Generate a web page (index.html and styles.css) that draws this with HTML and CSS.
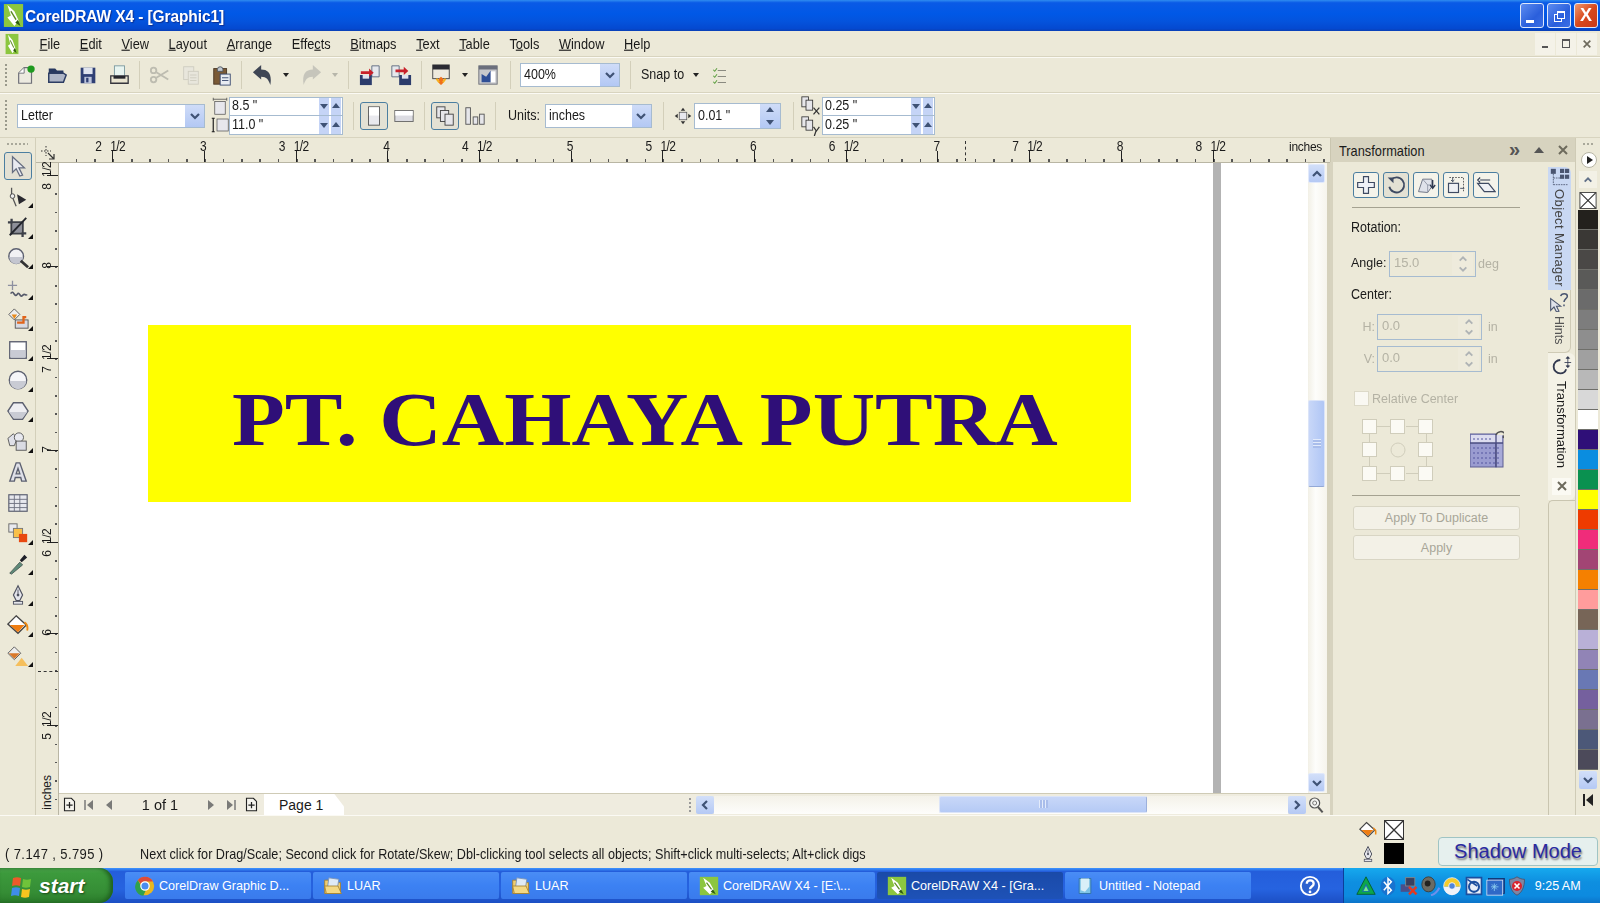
FILE: index.html
```html
<!DOCTYPE html>
<html lang="en">
<head>
<meta charset="utf-8">
<title>CorelDRAW X4 - [Graphic1]</title>
<link rel="stylesheet" href="styles.css">
</head>
<body>
<svg class="defs" xmlns="http://www.w3.org/2000/svg">
  <symbol id="corel" viewBox="0 0 24 24" preserveAspectRatio="none"><rect x="1" y="1" width="22" height="22" fill="#8cc63f"/><path d="M5 2l8 6 5 9-5 5-8-8 4-2z" fill="#fff"/><path d="M9 8l6 8" stroke="#5b8a1e" stroke-width="1.5"/><path d="M14 19l6 3-3-6z" fill="#2f5d10"/></symbol>
  <symbol id="chev" viewBox="0 0 12 12"><path d="M2 4l4 4 4-4" fill="none" stroke="#3f5275" stroke-width="2.2"/></symbol>
  <symbol id="chevu" viewBox="0 0 12 12"><path d="M2 8l4-4 4 4" fill="none" stroke="#3f5275" stroke-width="2.2"/></symbol>
  <symbol id="chevl" viewBox="0 0 12 12"><path d="M8 2L4 6l4 4" fill="none" stroke="#3f5275" stroke-width="2.2"/></symbol>
  <symbol id="chevr" viewBox="0 0 12 12"><path d="M4 2l4 4-4 4" fill="none" stroke="#3f5275" stroke-width="2.2"/></symbol>
  <symbol id="tri" viewBox="0 0 10 10"><path d="M1 3h8L5 8z" fill="#3f5275"/></symbol>
  <symbol id="triu" viewBox="0 0 10 10"><path d="M1 7h8L5 2z" fill="#3f5275"/></symbol>
  <symbol id="cornic" viewBox="0 0 16 16"><path d="M6 1v10M1 6h10" stroke="#333" stroke-dasharray="1.500 1.500" fill="none"/><path d="M8 8l6 6M14 9v5H9" fill="none" stroke="#333" stroke-width="1.200"/></symbol>
  <symbol id="new" viewBox="0 0 24 24"><path d="M4 10l6-6h8v17H4z" fill="#eceae0" stroke="#6f7078" stroke-width="1.3"/><path d="M4 10h6V4" fill="#fff" stroke="#6f7078"/><circle cx="17.5" cy="5.5" r="4" fill="#1f9a1f"/></symbol>
  <symbol id="open" viewBox="0 0 24 24"><path d="M3 5h7l2 2h7v4H3z" fill="#27385f"/><path d="M3 20V10h16l3 2-3 8z" fill="#aeb5c6" stroke="#2d3d63" stroke-width="1.6"/></symbol>
  <symbol id="save" viewBox="0 0 24 24"><path d="M4 4h16v17H4z" fill="#2f3f74"/><rect x="7" y="4" width="10" height="7" fill="#dfe3ee"/><rect x="8" y="14" width="8" height="7" fill="#bcc4dc"/><rect x="10" y="15" width="2.5" height="5" fill="#2f3f74"/></symbol>
  <symbol id="print" viewBox="0 0 24 24"><rect x="7" y="2" width="11" height="12" fill="#e8f4f0" stroke="#7c9aa0"/><path d="M3 13h19v8H3z" fill="#e9e4d0" stroke="#35353d" stroke-width="1.4"/><rect x="6" y="13" width="13" height="3" fill="#25252c"/></symbol>
  <symbol id="cut" viewBox="0 0 24 24"><g fill="none" stroke="#bdbcb0" stroke-width="2"><circle cx="5" cy="7" r="3"/><circle cx="5" cy="17" r="3"/><path d="M8 9l13 8M8 15l13-8"/></g></symbol>
  <symbol id="copy" viewBox="0 0 24 24"><g fill="#e8e6dc" stroke="#cfcdc0"><rect x="4" y="3" width="11" height="14"/><rect x="9" y="8" width="11" height="14"/><path d="M11 12h7M11 15h7M11 18h7"/></g></symbol>
  <symbol id="paste" viewBox="0 0 24 24"><rect x="3" y="5" width="14" height="17" fill="#7a5a36" stroke="#4b3826"/><path d="M7 6a3 3 0 016 0v2H7z" fill="#c0c8d0" stroke="#505860"/><rect x="10" y="11" width="11" height="12" fill="#e8ecf2" stroke="#3a4a70"/><path d="M12 15h7M12 18h7" stroke="#3a4a70"/></symbol>
  <symbol id="undo" viewBox="0 0 24 24"><path d="M1 9l9-8v5c8 0 12 5 10 17-2-6-4-9-10-9v3z" fill="#3f4655"/></symbol>
  <symbol id="redo" viewBox="0 0 24 24"><path d="M23 9l-9-8v5C6 6 2 11 4 23c2-6 4-9 10-9v3z" fill="#c6c5bb"/></symbol>
  <symbol id="import" viewBox="0 0 24 24"><path d="M14 2h8v12h-8z" fill="#e6e8ec" stroke="#5e6a80"/><rect x="1" y="12" width="13" height="11" fill="#2c3c6c"/><rect x="4" y="12" width="7" height="4" fill="#dfe3ee"/><path d="M2 8h9V5l5 4.5L11 14v-3H2z" fill="#c8202a"/></symbol>
  <symbol id="export" viewBox="0 0 24 24"><path d="M2 2h8v12H2z" fill="#e6e8ec" stroke="#5e6a80"/><rect x="10" y="12" width="13" height="11" fill="#2c3c6c"/><rect x="13" y="12" width="7" height="4" fill="#dfe3ee"/><path d="M6 6h9V3l5 4.5L15 12V9H6z" fill="#c8202a"/></symbol>
  <symbol id="publish" viewBox="0 0 24 24"><rect x="3" y="1" width="18" height="15" fill="#eeeadd" stroke="#444"/><rect x="3" y="1" width="18" height="5" fill="#2a2a32"/><path d="M12 14c4 3 4 6 0 9-4-3-4-6 0-9z" fill="#f0701a"/><path d="M7 16l3 4M17 16l-3 4" stroke="#f5b020" stroke-width="2"/></symbol>
  <symbol id="conn" viewBox="0 0 24 24"><rect x="2" y="2" width="20" height="20" fill="#c8c9cc" stroke="#6d7078"/><rect x="2" y="2" width="20" height="4" fill="#6b6f7c"/><path d="M5 20V11l5 3 5-7v13z" fill="#2f4f96"/><rect x="15" y="8" width="5" height="12" fill="#fff"/></symbol>
  <symbol id="check" viewBox="0 0 24 24"><g fill="none" stroke-width="1.4"><path d="M3 5l2 2 3-4M3 13l2 2 3-4M3 21l2 2 3-4" stroke="#5fa042"/><path d="M9 6h11M9 14h11M9 22h11" stroke="#8a8a80"/></g></symbol>
  <symbol id="pgw" viewBox="0 0 24 24"><path d="M3 3h18M3 1v4M21 1v4" stroke="#444" fill="none"/><rect x="5" y="6" width="14" height="17" fill="#e7e7ec" stroke="#555"/></symbol>
  <symbol id="pgh" viewBox="0 0 24 24"><path d="M3 3v18M1 3h4M1 21h4" stroke="#222" stroke-width="1.6" fill="none"/><rect x="8" y="4" width="15" height="16" fill="#e7e7ec" stroke="#555"/></symbol>
  <symbol id="portrait" viewBox="0 0 24 24"><rect x="6" y="2" width="12" height="20" fill="#e9e9ee" stroke="#555"/><rect x="6.5" y="2.500" width="11" height="9" fill="#fff"/></symbol>
  <symbol id="landscape" viewBox="0 0 24 24"><rect x="2" y="6" width="20" height="12" fill="#dcdce2" stroke="#666"/><rect x="2.500" y="6.500" width="19" height="5" fill="#fff"/></symbol>
  <symbol id="pages" viewBox="0 0 24 24"><g fill="#e6e6ea" stroke="#444"><rect x="3" y="2" width="9" height="12"/><rect x="7" y="6" width="9" height="12"/><rect x="12" y="10" width="9" height="12"/></g></symbol>
  <symbol id="layout" viewBox="0 0 24 24"><g fill="#e6e6ea" stroke="#555"><rect x="2" y="3" width="5" height="18"/><rect x="10" y="13" width="5" height="8"/><rect x="17" y="10" width="5" height="11"/></g></symbol>
  <symbol id="nudge" viewBox="0 0 24 24"><rect x="7" y="7" width="10" height="10" fill="#e8e8ee" stroke="#555"/><path d="M12 1l3 4H9zM12 23l3-4H9zM1 12l4-3v6zM23 12l-4-3v6z" fill="#333"/></symbol>
  <symbol id="dupx" viewBox="0 0 24 24"><g fill="#e6e6ea" stroke="#333"><rect x="1" y="1" width="8" height="12"/><rect x="6" y="5" width="8" height="12"/></g><path d="M15 14l7 8M22 14l-7 8" stroke="#333" stroke-width="1.5"/></symbol>
  <symbol id="dupy" viewBox="0 0 24 24"><g fill="#e6e6ea" stroke="#333"><rect x="1" y="1" width="8" height="12"/><rect x="6" y="5" width="8" height="12"/></g><path d="M15 13l3.500 5 3.500-5M18 18l-2 6" stroke="#333" stroke-width="1.5" fill="none"/></symbol>
  <symbol id="pick" viewBox="0 0 24 24"><path d="M6 2v17l4-4 4 8 3-1-4-8h6z" fill="#e9eaf0" stroke="#666d80" stroke-width="1.4"/></symbol>
  <symbol id="shape" viewBox="0 0 24 24"><path d="M5 2v8l5 12" fill="none" stroke="#555" stroke-width="1.4"/><circle cx="6" cy="11" r="2.500" fill="#eee" stroke="#444"/><path d="M11 9l10 6-8 5z" fill="#2a2a30"/></symbol>
  <symbol id="crop" viewBox="0 0 24 24"><path d="M5 3v16h16M1 7h16v16" fill="none" stroke="#3d4048" stroke-width="2.5"/><rect x="6" y="8" width="10" height="10" fill="#8d8f9a"/><path d="M3 21L21 2" stroke="#23252c" stroke-width="2"/></symbol>
  <symbol id="zoom" viewBox="0 0 24 24"><circle cx="10" cy="10" r="8" fill="#f1f1f4" stroke="#5c6070" stroke-width="1.600"/><path d="M2.500 11h15a7.500 7.500 0 01-15 0z" fill="#c4c6d0"/><path d="M15 15l8 7" stroke="#333" stroke-width="3"/></symbol>
  <symbol id="curve" viewBox="0 0 24 24"><path d="M6 3v10M1 8h10" stroke="#8d90a0" stroke-width="1.4"/><path d="M4 17c3-5 4 5 7 1s3 4 6 1 3 1 5-1" fill="none" stroke="#565a6a" stroke-width="1.800"/></symbol>
  <symbol id="smart" viewBox="0 0 24 24"><path d="M8 1l6 6-6 6-6-6z" fill="#eee" stroke="#555"/><path d="M5 7l6 0-3 5z" fill="#e88a1a"/><rect x="9" y="13" width="14" height="9" fill="#d8dae2" stroke="#555"/><path d="M11 16h7v-6h3" fill="none" stroke="#e0641a" stroke-width="2.500"/></symbol>
  <symbol id="rect" viewBox="0 0 24 24"><rect x="3" y="3" width="18" height="18" fill="#fff" stroke="#5c6070" stroke-width="1.500"/><rect x="4" y="12" width="16" height="8" fill="#c9cbd4"/></symbol>
  <symbol id="ell" viewBox="0 0 24 24"><circle cx="12" cy="12" r="9.500" fill="#f5f5f8" stroke="#5c6070" stroke-width="1.500"/><path d="M3 13h18a9 9 0 01-18 0z" fill="#c9cbd4"/></symbol>
  <symbol id="poly" viewBox="0 0 24 24"><path d="M7 3h10l6 9-6 9H7L1 12z" fill="#eeeef2" stroke="#5c6070" stroke-width="1.500"/><path d="M2 13h20l-5 7H7z" fill="#c9cbd4"/></symbol>
  <symbol id="shapes" viewBox="0 0 24 24"><path d="M1 8l6-5 4 5-3 8H3z" fill="#dfe0e8" stroke="#555"/><circle cx="13" cy="7" r="5" fill="#e8e9ef" stroke="#555"/><rect x="10" y="11" width="11" height="10" fill="#dadbe3" stroke="#555"/></symbol>
  <symbol id="atext" viewBox="0 0 24 24"><path d="M3 22L10 2h4l7 20h-5l-1-4H9l-1 4zM10 14h4l-2-6z" fill="#dfe0e8" stroke="#5c6070" stroke-width="1.500"/></symbol>
  <symbol id="table" viewBox="0 0 24 24"><rect x="2" y="3" width="20" height="18" fill="#e7e8ee" stroke="#5c6070" stroke-width="1.300"/><path d="M2 8h20M2 12.500h20M2 17h20M8 3v18M14 3v18" stroke="#6c7080"/></symbol>
  <symbol id="blend" viewBox="0 0 24 24"><rect x="2" y="2" width="9" height="9" fill="#e9eaef" stroke="#666"/><rect x="7" y="7" width="10" height="10" fill="#f8c04a" stroke="#777"/><rect x="13" y="13" width="9" height="9" fill="#e8480f"/></symbol>
  <symbol id="drop" viewBox="0 0 24 24"><path d="M3 22l11-12 3 3L5 23z" fill="#5d8a78" stroke="#4b5c58"/><path d="M14 8l5-6 3 3-6 5z" fill="#1d1f28"/></symbol>
  <symbol id="pen" viewBox="0 0 24 24"><path d="M12 2l5 10-3 6h-4l-3-6z" fill="#e5e6ec" stroke="#4f5260" stroke-width="1.300"/><path d="M12 6v6" stroke="#4f5260"/><circle cx="12" cy="12" r="1.500" fill="#4f5260"/><rect x="7" y="19" width="10" height="3" fill="#e5e6ec" stroke="#4f5260"/></symbol>
  <symbol id="fill" viewBox="0 0 24 24"><path d="M10 2l11 10-9 9L1 11z" fill="#fff" stroke="#444" stroke-width="1.500"/><path d="M3 12h16l-7 8z" fill="#ef7d12"/><path d="M19 9c3 2 4 5 3 9" fill="none" stroke="#ef8a12" stroke-width="2"/></symbol>
  <symbol id="ifill" viewBox="0 0 24 24"><path d="M8 2l7 7-7 7-7-7z" fill="#eee" stroke="#555"/><path d="M2 9h12l-6 6z" fill="#d9782a"/><path d="M9 23l7-9 7 9z" fill="#f5bf5d"/></symbol>
  <symbol id="plusdoc" viewBox="0 0 24 24"><path d="M4 2h11l5 5v15H4z" fill="#f5f4ee" stroke="#222" stroke-width="1.800"/><path d="M12 8v10M7 13h10" stroke="#222" stroke-width="2"/></symbol>
  <symbol id="pfirst" viewBox="0 0 12 12"><path d="M2 1v10" stroke="#7a7a78" stroke-width="1.500"/><path d="M10 1v10L4 6z" fill="#7a7a78"/></symbol>
  <symbol id="pprev" viewBox="0 0 12 12"><path d="M9 1v10L3 6z" fill="#7a7a78"/></symbol>
  <symbol id="pnext" viewBox="0 0 12 12"><path d="M3 1v10l6-5z" fill="#7a7a78"/></symbol>
  <symbol id="plast" viewBox="0 0 12 12"><path d="M2 1v10l6-5z" fill="#7a7a78"/><path d="M10 1v10" stroke="#7a7a78" stroke-width="1.500"/></symbol>
  <symbol id="mag" viewBox="0 0 24 24"><circle cx="10" cy="9" r="7.500" fill="#f4f4f2" stroke="#555" stroke-width="1.800"/><circle cx="10" cy="9" r="3" fill="none" stroke="#777" stroke-width="1.500"/><path d="M15 15l7 8" stroke="#555" stroke-width="3"/></symbol>
  <symbol id="dmove" viewBox="0 0 24 24"><path d="M9 2h6v7h7v6h-7v7H9v-7H2V9h7z" fill="#eef1f7" stroke="#3e4a62" stroke-width="1.400"/></symbol>
  <symbol id="drot" viewBox="0 0 24 24"><path d="M6 6a9 9 0 11-2 8" fill="none" stroke="#3e4a62" stroke-width="2.200"/><path d="M2 3h7v7z" fill="#3e4a62"/></symbol>
  <symbol id="dscale" viewBox="0 0 24 24"><path d="M3 20L8 5h11v9l-5 7z" fill="#dfe2ea" stroke="#747a8a" stroke-width="1.200"/><path d="M8 5l6 7v9M14 12h5" fill="none" stroke="#8a90a0"/><path d="M20 6v9M17 12l3 4 3-4" fill="none" stroke="#2d3850" stroke-width="1.600"/></symbol>
  <symbol id="dsize" viewBox="0 0 24 24"><path d="M4 3h17v18" fill="none" stroke="#444" stroke-dasharray="2 1.500"/><rect x="3" y="10" width="12" height="11" fill="#eef0f4" stroke="#3e4a62" stroke-width="1.400"/><path d="M8 3v5M6 6l2 2 2-2M17 16h5" stroke="#2d3850" fill="none"/></symbol>
  <symbol id="dskew" viewBox="0 0 24 24"><path d="M2 10h13l8 10H10z" fill="#eef0f4" stroke="#3e4a62" stroke-width="1.500"/><path d="M5 6h12M5 3L2 6l3 3" fill="none" stroke="#2d3850" stroke-width="1.300"/></symbol>
  <symbol id="sbgrid" viewBox="0 0 34 38"><rect x="0" y="4" width="26" height="33" fill="#9a9cd0" stroke="#5c5e92"/><rect x="26" y="6" width="7" height="31" fill="#a8aad8" stroke="#5c5e92"/><rect x="1" y="5" width="31" height="8" fill="#dcdcef"/><path d="M0 13h33M26 4v33" stroke="#4a4c80" stroke-width="1.300"/><path d="M3 9h20M3 18h28M3 23h28M3 28h28M3 33h28" stroke="#5557a0" stroke-dasharray="2 2"/><path d="M26 5a5 5 0 019-1l-2 4" fill="none" stroke="#555" stroke-width="1.500"/></symbol>
  <symbol id="tabom" viewBox="0 0 24 24"><g fill="#4a5570"><rect x="1" y="1" width="6" height="6"/><rect x="12" y="1" width="5" height="5"/><rect x="18" y="1" width="5" height="5"/><rect x="12" y="8" width="5" height="5"/><rect x="18" y="8" width="5" height="5"/></g><path d="M4 7v13M4 12h8M4 20h18" stroke="#4a5570" stroke-dasharray="2 1" fill="none"/></symbol>
  <symbol id="tabh" viewBox="0 0 24 24"><path d="M2 8v14l4-4 3 6 3-1-3-6h5z" fill="#dfe2ea" stroke="#4a5570" stroke-width="1.300"/><path d="M14 5c1-4 8-4 8 0 0 3-4 3-4 7M18 15v2" fill="none" stroke="#4a5570" stroke-width="1.800"/></symbol>
  <symbol id="tabt" viewBox="0 0 24 24"><path d="M10 6a8 8 0 100 16c4 0 6-2 7-5" fill="none" stroke="#333a50" stroke-width="2.200"/><path d="M15 9h8M19 2v13M19 2l-2 2h4zM19 15l-2-2h4z" stroke="#333a50" fill="#333a50"/></symbol>
  <symbol id="xmark" viewBox="0 0 12 12"><path d="M2 2l8 8M10 2l-8 8" stroke="#6d6a5c" stroke-width="2"/></symbol>
  <symbol id="xbox" viewBox="0 0 20 20"><rect x=".5" y=".5" width="19" height="19" fill="#fff" stroke="#333"/><path d="M1 1l18 18M19 1L1 19" stroke="#333" stroke-width="1.300"/></symbol>
  <symbol id="flag" viewBox="0 0 24 24"><path d="M3 4c3-1 5-1 8 0l-1 8c-3-1-5-1-8 0z" fill="#ee5a2a"/><path d="M13 5c3 1 5 1 8 0l-1 8c-3 1-5 1-8 0z" fill="#6fc33a"/><path d="M2 14c3-1 5-1 8 0l-1 8c-3-1-5-1-8 0z" fill="#3f8de8"/><path d="M12 15c3 1 5 1 8 0l-1 8c-3 1-5 1-8 0z" fill="#f7c51f"/></symbol>
  <symbol id="chrome" viewBox="0 0 24 24"><circle cx="12" cy="12" r="11" fill="#e8b81f"/><path d="M12 1a11 11 0 019.500 5.500H12a5.500 5.500 0 00-5 3L3.500 5A11 11 0 0112 1z" fill="#dd4b3a"/><path d="M3.500 5L8 13a5 5 0 005 4l-3 6.800A11 11 0 013.500 5z" fill="#2fa04f"/><circle cx="12" cy="12" r="5" fill="#4a8df0" stroke="#fff" stroke-width="1.500"/></symbol>
  <symbol id="folder" viewBox="0 0 24 24"><path d="M2 5h9l2 3h8v13H2z" fill="#f0cd6e" stroke="#a5802e"/><rect x="6" y="3" width="12" height="14" fill="#dfeaf6" stroke="#7a93b5" transform="rotate(8 12 10)"/><path d="M2 12h16l4 9H4z" fill="#f4d984" stroke="#a5802e"/></symbol>
  <symbol id="note" viewBox="0 0 24 24"><path d="M5 3h14v18H5z" fill="#7fc4e6" stroke="#2f6f9f"/><path d="M7 3h10v10l-5 6-5-2z" fill="#d9eff8"/></symbol>
  <symbol id="help" viewBox="0 0 24 24"><circle cx="12" cy="12" r="10" fill="#2d62d0" stroke="#fff" stroke-width="2"/><path d="M8.500 9.500c0-5 7.500-5 7.500 0 0 3-4 3-4 6" fill="none" stroke="#fff" stroke-width="2.500"/><circle cx="12" cy="18.500" r="1.500" fill="#fff"/></symbol>
  <symbol id="t1" viewBox="0 0 24 24"><path d="M12 1l11 21H1z" fill="#0da64b" stroke="#05582a"/><path d="M12 9l5 10H7z" fill="#1a6fb0"/><path d="M12 12l3 6H9z" fill="#78ea8c"/></symbol>
  <symbol id="t2" viewBox="0 0 24 24"><ellipse cx="12" cy="12" rx="9" ry="11" fill="#1873cf"/><path d="M7 7l9 10-4 4V3l4 4-9 10" fill="none" stroke="#fff" stroke-width="1.800"/></symbol>
  <symbol id="t3" viewBox="0 0 24 24"><rect x="2" y="10" width="11" height="9" fill="#4a4f8a"/><rect x="8" y="2" width="11" height="10" fill="#38405f" stroke="#888"/><path d="M12 13l9 9M21 13l-9 9" stroke="#e23a22" stroke-width="3"/></symbol>
  <symbol id="t4" viewBox="0 0 24 24"><ellipse cx="9" cy="10" rx="8" ry="9" fill="#6b6b63" stroke="#3a3a36"/><circle cx="8" cy="9" r="3.500" fill="#232320"/><path d="M12 23c5-1 8-5 10-9" stroke="#6f8fea" stroke-width="2.500" fill="none"/></symbol>
  <symbol id="t5" viewBox="0 0 24 24"><path d="M12 2a10 10 0 0110 11H2A10 10 0 0112 2z" fill="#f5cd2c"/><circle cx="12" cy="12" r="10" fill="none" stroke="#e9ecf5" stroke-width="1"/><path d="M2 13h20a10 10 0 01-20 0z" fill="#f0f2f8"/><circle cx="12" cy="12" r="4" fill="#4f86d9" stroke="#fff"/></symbol>
  <symbol id="t6" viewBox="0 0 24 24"><path d="M3 2h18v20H3z" fill="#e8eff9" stroke="#1c4f9f" stroke-width="2"/><circle cx="12" cy="13" r="6" fill="none" stroke="#1c4f9f" stroke-width="2.500"/><path d="M4 4l12 8" stroke="#1c4f9f" stroke-width="2"/></symbol>
  <symbol id="t7" viewBox="0 0 24 24"><rect x="3" y="3" width="19" height="18" fill="#2350a0" stroke="#0f2f6a"/><rect x="1" y="5" width="19" height="18" fill="#2f69c7" stroke="#cfdcf0"/><path d="M10 9v9M6 13h9M7 10l6 6M13 10l-6 6" stroke="#8fd0f0"/></symbol>
  <symbol id="t8" viewBox="0 0 24 24"><path d="M12 1c3 2 6 3 9 3 0 9-3 16-9 19C6 20 3 13 3 4c3 0 6-1 9-3z" fill="#7f86a3" stroke="#4a4f68"/><circle cx="12" cy="12" r="6" fill="#d9232f"/><path d="M9 9l6 6M15 9l-6 6" stroke="#fff" stroke-width="2"/></symbol>
</svg>

<div class="app">
  <header class="titlebar">
    <svg class="ti-logo"><use href="#corel"/></svg>
    <span class="ti-text">CorelDRAW X4 - [Graphic1]</span>
    <div class="win-btns">
      <span class="wb"><i class="wb-min"></i></span>
      <span class="wb"><i class="wb-rest"></i></span>
      <span class="wb wb-close">X</span>
    </div>
  </header>

  <nav class="menubar">
    <svg class="mn-logo"><use href="#corel"/></svg>
    <span class="mi"><u>F</u>ile</span>
    <span class="mi"><u>E</u>dit</span>
    <span class="mi"><u>V</u>iew</span>
    <span class="mi"><u>L</u>ayout</span>
    <span class="mi"><u>A</u>rrange</span>
    <span class="mi">Effe<u>c</u>ts</span>
    <span class="mi"><u>B</u>itmaps</span>
    <span class="mi"><u>T</u>ext</span>
    <span class="mi"><u>T</u>able</span>
    <span class="mi">T<u>o</u>ols</span>
    <span class="mi"><u>W</u>indow</span>
    <span class="mi"><u>H</u>elp</span>
    <div class="mdi-btns">
      <span class="mb"><i class="mb-min"></i></span>
      <span class="mb"><i class="mb-rest"></i></span>
      <span class="mb"><svg class="ic10"><use href="#xmark"/></svg></span>
    </div>
  </nav>

  <div class="toolbar tb1">
    <span class="grip"></span>
    <span class="s31"><svg class="ic"><use href="#new"/></svg></span>
    <span class="s31"><svg class="ic"><use href="#open"/></svg></span>
    <span class="s31"><svg class="ic"><use href="#save"/></svg></span>
    <span class="s31"><svg class="ic"><use href="#print"/></svg></span>
    <span class="sep ml5 mr4"></span>
    <span class="s31"><svg class="ic"><use href="#cut"/></svg></span>
    <span class="s31"><svg class="ic"><use href="#copy"/></svg></span>
    <span class="s31"><svg class="ic"><use href="#paste"/></svg></span>
    <span class="sep ml4 mr6"></span>
    <span class="s30"><svg class="ic"><use href="#undo"/></svg></span>
    <span class="s16"><i class="mini"></i></span>
    <span class="s30 ml2"><svg class="ic"><use href="#redo"/></svg></span>
    <span class="s16 ml1"><i class="mini mini-off"></i></span>
    <span class="sep ml5 mr5"></span>
    <span class="s31"><svg class="ic"><use href="#import"/></svg></span>
    <span class="s31"><svg class="ic"><use href="#export"/></svg></span>
    <span class="sep ml5 mr4"></span>
    <span class="s30"><svg class="ic"><use href="#publish"/></svg></span>
    <span class="s16 ml1"><i class="mini"></i></span>
    <span class="s30"><svg class="ic"><use href="#conn"/></svg></span>
    <span class="sep ml7 mr9"></span>
    <div class="combo cb-zoom"><span class="cb-val">400%</span><span class="dd"><svg class="ic12"><use href="#chev"/></svg></span></div>
    <span class="sep ml10 mr10"></span>
    <span class="lbl">Snap to</span>
    <span class="s16 ml4"><i class="mini"></i></span>
    <span class="s16 ml8"><svg class="ic18"><use href="#check"/></svg></span>
  </div>

  <div class="toolbar tb2">
    <span class="grip"></span>
    <div class="combo cb-page"><span class="cb-val">Letter</span><span class="dd"><svg class="ic12"><use href="#chev"/></svg></span></div>
    <div class="stackic"><svg class="ic18"><use href="#pgw"/></svg><svg class="ic18"><use href="#pgh"/></svg></div>
    <div class="pair pair-size">
      <div class="pr"><span class="pv">8.5 "</span><span class="mspin"><svg class="ic10"><use href="#tri"/></svg></span><span class="mspin"><svg class="ic10"><use href="#triu"/></svg></span></div>
      <div class="pr"><span class="pv">11.0 "</span><span class="mspin"><svg class="ic10"><use href="#tri"/></svg></span><span class="mspin"><svg class="ic10"><use href="#triu"/></svg></span></div>
    </div>
    <span class="sep ml10 mr6"></span>
    <span class="tbtn"><svg class="ic"><use href="#portrait"/></svg></span>
    <span class="s32"><svg class="ic"><use href="#landscape"/></svg></span>
    <span class="sep ml4 mr6"></span>
    <span class="tbtn"><svg class="ic"><use href="#pages"/></svg></span>
    <span class="s32"><svg class="ic"><use href="#layout"/></svg></span>
    <span class="sep ml4 mr12"></span>
    <span class="lbl lbl-units">Units:</span>
    <div class="combo cb-units ml5"><span class="cb-val">inches</span><span class="dd"><svg class="ic12"><use href="#chev"/></svg></span></div>
    <span class="sep ml11 mr9"></span>
    <span class="s21"><svg class="ic18"><use href="#nudge"/></svg></span>
    <div class="combo cb-nudge"><span class="cb-val">0.01 "</span><span class="spin"><svg class="ic10"><use href="#triu"/></svg><svg class="ic10"><use href="#tri"/></svg></span></div>
    <span class="sep ml12 mr6"></span>
    <div class="stackic sic22"><svg class="ic20"><use href="#dupx"/></svg><svg class="ic20"><use href="#dupy"/></svg></div>
    <div class="pair pair-dup">
      <div class="pr"><span class="pv">0.25 "</span><span class="mspin"><svg class="ic10"><use href="#tri"/></svg></span><span class="mspin"><svg class="ic10"><use href="#triu"/></svg></span></div>
      <div class="pr"><span class="pv">0.25 "</span><span class="mspin"><svg class="ic10"><use href="#tri"/></svg></span><span class="mspin"><svg class="ic10"><use href="#triu"/></svg></span></div>
    </div>
  </div>

  <div class="workspace">
    <aside class="toolbox">
      <span class="grip-h"></span>
      <span class="tool tool-on"><svg class="ic"><use href="#pick"/></svg></span>
      <span class="tool fly"><svg class="ic"><use href="#shape"/></svg></span>
      <span class="tool fly"><svg class="ic"><use href="#crop"/></svg></span>
      <span class="tool fly"><svg class="ic"><use href="#zoom"/></svg></span>
      <span class="tool fly"><svg class="ic"><use href="#curve"/></svg></span>
      <span class="tool fly"><svg class="ic"><use href="#smart"/></svg></span>
      <span class="tool fly"><svg class="ic"><use href="#rect"/></svg></span>
      <span class="tool fly"><svg class="ic"><use href="#ell"/></svg></span>
      <span class="tool fly"><svg class="ic"><use href="#poly"/></svg></span>
      <span class="tool fly"><svg class="ic"><use href="#shapes"/></svg></span>
      <span class="tool"><svg class="ic"><use href="#atext"/></svg></span>
      <span class="tool"><svg class="ic"><use href="#table"/></svg></span>
      <span class="tool fly"><svg class="ic"><use href="#blend"/></svg></span>
      <span class="tool fly"><svg class="ic"><use href="#drop"/></svg></span>
      <span class="tool fly"><svg class="ic"><use href="#pen"/></svg></span>
      <span class="tool fly"><svg class="ic"><use href="#fill"/></svg></span>
      <span class="tool fly"><svg class="ic"><use href="#ifill"/></svg></span>
    </aside>

    <section class="doc">
      <div class="rtop">
        <div class="corner"><svg class="ic16"><use href="#cornic"/></svg></div>
        <div class="rtop-track">
          <div class="rc"><span class="rn">2</span><span class="rh">1/2</span></div>
          <div class="rc"><span class="rw">3</span></div>
          <div class="rc"><span class="rn">3</span><span class="rh">1/2</span></div>
          <div class="rc"><span class="rw">4</span></div>
          <div class="rc"><span class="rn">4</span><span class="rh">1/2</span></div>
          <div class="rc"><span class="rw">5</span></div>
          <div class="rc"><span class="rn">5</span><span class="rh">1/2</span></div>
          <div class="rc"><span class="rw">6</span></div>
          <div class="rc"><span class="rn">6</span><span class="rh">1/2</span></div>
          <div class="rc"><span class="rw">7</span></div>
          <div class="rc"><span class="rn">7</span><span class="rh">1/2</span></div>
          <div class="rc"><span class="rw">8</span></div>
          <div class="rc"><span class="rn">8</span><span class="rh">1/2</span></div>
          <span class="runit">inches</span>
          <i class="rcursor"></i>
        </div>
      </div>
      <div class="docbody">
        <div class="rleft">
          <div class="vc"><span class="vn">8</span><span class="vh">1/2</span></div>
          <div class="vc"><span class="vw">8</span></div>
          <div class="vc"><span class="vn">7</span><span class="vh">1/2</span></div>
          <div class="vc"><span class="vw">7</span></div>
          <div class="vc"><span class="vn">6</span><span class="vh">1/2</span></div>
          <div class="vc"><span class="vw">6</span></div>
          <div class="vc"><span class="vn">5</span><span class="vh">1/2</span></div>
          <span class="vunit">inches</span>
          <i class="vcursor"></i>
        </div>
        <div class="docmain">
          <div class="canvasrow">
            <div class="canvas">
              <div class="pageedge"></div>
              <div class="banner"><span class="banner-text">PT. CAHAYA PUTRA</span></div>
            </div>
            <div class="vscroll">
              <span class="sbtn"><svg class="ic12"><use href="#chevu"/></svg></span>
              <span class="vthumb"><i class="thumbgrip"></i></span>
              <span class="sbtn"><svg class="ic12"><use href="#chev"/></svg></span>
            </div>
          </div>
          <div class="pagebar">
            <span class="pg"><svg class="ic14"><use href="#plusdoc"/></svg></span>
            <span class="pg"><svg class="ic12"><use href="#pfirst"/></svg></span>
            <span class="pg"><svg class="ic12"><use href="#pprev"/></svg></span>
            <span class="pgnum">1 of 1</span>
            <span class="pg"><svg class="ic12"><use href="#pnext"/></svg></span>
            <span class="pg"><svg class="ic12"><use href="#plast"/></svg></span>
            <span class="pg"><svg class="ic14"><use href="#plusdoc"/></svg></span>
            <span class="pgtab">Page 1</span>
            <i class="pggrip"></i>
            <div class="hscroll">
              <span class="hbtn"><svg class="ic12"><use href="#chevl"/></svg></span>
              <span class="htrack"><span class="hthumb"><i class="thumbgrip-h"></i></span></span>
              <span class="hbtn"><svg class="ic12"><use href="#chevr"/></svg></span>
            </div>
            <span class="pgmag"><svg class="ic16"><use href="#mag"/></svg></span>
          </div>
        </div>
      </div>
    </section>

    <aside class="docker">
      <div class="dk-head">
        <span class="dk-title">Transformation</span>
        <span class="dk-more">»</span>
        <span class="dk-up"></span>
        <svg class="ic12 dk-x"><use href="#xmark"/></svg>
      </div>
      <div class="dk-body">
        <div class="dk-panel">
          <div class="dk-tabs">
            <span class="dtb"><svg class="ic20"><use href="#dmove"/></svg></span>
            <span class="dtb dtb-on"><svg class="ic20"><use href="#drot"/></svg></span>
            <span class="dtb"><svg class="ic20"><use href="#dscale"/></svg></span>
            <span class="dtb"><svg class="ic20"><use href="#dsize"/></svg></span>
            <span class="dtb"><svg class="ic20"><use href="#dskew"/></svg></span>
          </div>
          <hr class="rule rule-a">
          <div class="fl fl-rot">Rotation:</div>
          <div class="frow fr-angle">
            <span class="fl-in">Angle:</span>
            <span class="dis-in di-angle"><span class="dv">15.0</span><span class="dspin"><svg class="ic10"><use href="#chevu"/></svg><svg class="ic10"><use href="#chev"/></svg></span></span>
            <span class="dunit">deg</span>
          </div>
          <div class="fl fl-center">Center:</div>
          <div class="frow fr-h">
            <span class="fl-dis">H:</span>
            <span class="dis-in di-c"><span class="dv">0.0</span><span class="dspin"><svg class="ic10"><use href="#chevu"/></svg><svg class="ic10"><use href="#chev"/></svg></span></span>
            <span class="dunit dunit-in">in</span>
          </div>
          <div class="frow fr-v">
            <span class="fl-dis">V:</span>
            <span class="dis-in di-c"><span class="dv">0.0</span><span class="dspin"><svg class="ic10"><use href="#chevu"/></svg><svg class="ic10"><use href="#chev"/></svg></span></span>
            <span class="dunit dunit-in">in</span>
          </div>
          <label class="relc"><span class="cbx"></span><span>Relative Center</span></label>
          <div class="anchors">
            <svg class="anchor-svg" viewBox="0 0 72 62">
              <g class="anc-lines"><path d="M15 7.500h14M44 7.500h13M15 54.500h14M44 54.500h13M7.500 15v8M64.500 15v8M7.500 38v9M64.500 38v9"/></g>
              <g class="anc-box"><rect x=".5" y=".5" width="14" height="14"/><rect x="28.500" y=".5" width="14" height="14"/><rect x="56.500" y=".5" width="14" height="14"/><rect x=".5" y="23.500" width="14" height="14"/><circle cx="36" cy="31" r="7"/><rect x="56.500" y="23.500" width="14" height="14"/><rect x=".5" y="47.500" width="14" height="14"/><rect x="28.500" y="47.500" width="14" height="14"/><rect x="56.500" y="47.500" width="14" height="14"/></g>
            </svg>
            <svg class="anchor-ic"><use href="#sbgrid"/></svg>
          </div>
          <hr class="rule rule-b">
          <span class="apply ap-a">Apply To Duplicate</span>
          <span class="apply ap-b">Apply</span>
        </div>
        <div class="dk-side">
          <div class="vtab vtab-om"><svg class="ic20"><use href="#tabom"/></svg><span class="vtxt">Object Manager</span></div>
          <div class="vtab vtab-h"><svg class="ic20"><use href="#tabh"/></svg><span class="vtxt">Hints</span></div>
          <div class="vtab vtab-t"><svg class="ic20"><use href="#tabt"/></svg><span class="vtxt">Transformation</span><span class="vclose"><svg class="ic12"><use href="#xmark"/></svg></span></div>
          <div class="vrest"></div>
        </div>
      </div>
    </aside>

    <aside class="palette">
      <span class="grip-p"></span>
      <span class="pl-play"></span>
      <span class="pl-up"><svg class="ic10"><use href="#chevu"/></svg></span>
      <svg class="pl-none"><use href="#xbox"/></svg>
      <div class="swatches">
        <i class="sw c1"></i><i class="sw c2"></i><i class="sw c3"></i><i class="sw c4"></i><i class="sw c5"></i><i class="sw c6"></i><i class="sw c7"></i><i class="sw c8"></i><i class="sw c9"></i><i class="sw c10"></i><i class="sw c11"></i><i class="sw c12"></i><i class="sw c13"></i><i class="sw c14"></i><i class="sw c15"></i><i class="sw c16"></i><i class="sw c17"></i><i class="sw c18"></i><i class="sw c19"></i><i class="sw c20"></i><i class="sw c21"></i><i class="sw c22"></i><i class="sw c23"></i><i class="sw c24"></i><i class="sw c25"></i><i class="sw c26"></i><i class="sw c27"></i><i class="sw c28"></i>
      </div>
      <span class="pl-down"><svg class="ic12"><use href="#chev"/></svg></span>
      <span class="pl-end"></span>
    </aside>
  </div>

  <footer class="status">
    <span class="st-coord">( 7.147 , 5.795 )</span>
    <span class="st-hint">Next click for Drag/Scale; Second click for Rotate/Skew; Dbl-clicking tool selects all objects; Shift+click multi-selects; Alt+click digs</span>
    <div class="st-swatches">
      <div class="st-row"><svg class="ic18"><use href="#fill"/></svg><svg class="st-sw"><use href="#xbox"/></svg></div>
      <div class="st-row"><svg class="ic18"><use href="#pen"/></svg><span class="st-black"></span></div>
    </div>
    <span class="shadow">Shadow Mode</span>
  </footer>

  <div class="taskbar">
    <span class="start"><svg class="ic22"><use href="#flag"/></svg><span class="start-t">start</span></span>
    <div class="tasks">
      <span class="task"><svg class="ic20"><use href="#chrome"/></svg><span>CorelDraw Graphic D...</span></span>
      <span class="task"><svg class="ic20"><use href="#folder"/></svg><span>LUAR</span></span>
      <span class="task"><svg class="ic20"><use href="#folder"/></svg><span>LUAR</span></span>
      <span class="task"><svg class="ic20"><use href="#corel"/></svg><span>CorelDRAW X4 - [E:\...</span></span>
      <span class="task task-on"><svg class="ic20"><use href="#corel"/></svg><span>CorelDRAW X4 - [Gra...</span></span>
      <span class="task"><svg class="ic20"><use href="#note"/></svg><span>Untitled - Notepad</span></span>
    </div>
    <svg class="tk-help"><use href="#help"/></svg>
    <div class="tray">
      <svg class="ic20"><use href="#t1"/></svg>
      <svg class="ic20"><use href="#t2"/></svg>
      <svg class="ic20"><use href="#t3"/></svg>
      <svg class="ic20"><use href="#t4"/></svg>
      <svg class="ic20"><use href="#t5"/></svg>
      <svg class="ic20"><use href="#t6"/></svg>
      <svg class="ic20"><use href="#t7"/></svg>
      <svg class="ic20"><use href="#t8"/></svg>
      <span class="clock">9:25 AM</span>
    </div>
  </div>
</div>
</body>
</html>
```

FILE: styles.css
```css
* { box-sizing: border-box; }
html, body { margin: 0; padding: 0; }
body { width: 1600px; height: 903px; overflow: hidden; background: #ece9d8; font-family: "Liberation Sans", Arial, sans-serif; font-size: 13px; color: #1a1a1a; }
.defs { position: absolute; width: 0; height: 0; }
.app { width: 1600px; height: 903px; display: flex; flex-direction: column; filter: blur(0.35px); }
svg { display: block; flex: none; }
i { display: block; font-style: normal; }

.ic { width: 22px; height: 22px; }
.ic10 { width: 10px; height: 10px; }
.ic12 { width: 12px; height: 12px; }
.ic14 { width: 15px; height: 17px; }
.ic16 { width: 16px; height: 16px; }
.ic18 { width: 18px; height: 18px; }
.ic20 { width: 20px; height: 20px; }
.ic22 { width: 24px; height: 24px; }

.ml1 { margin-left: 1px; } .ml2 { margin-left: 2px; } .ml4 { margin-left: 4px; } .ml5 { margin-left: 5px; } .ml7 { margin-left: 7px; } .ml8 { margin-left: 8px; } .ml10 { margin-left: 10px; } .ml11 { margin-left: 11px; } .ml12 { margin-left: 12px; }
.mr4 { margin-right: 4px; } .mr5 { margin-right: 5px; } .mr6 { margin-right: 6px; } .mr7 { margin-right: 7px; } .mr8 { margin-right: 8px; } .mr9 { margin-right: 9px; } .mr10 { margin-right: 10px; } .mr12 { margin-right: 12px; }

/* title bar */
.titlebar { height: 31px; flex: none; display: flex; align-items: center; padding: 0 2px 0 3px; background: linear-gradient(180deg, #2f8cf0 0, #0a5ae6 9%, #0058e6 45%, #0453dc 70%, #0449d0 92%, #0a3fb5 100%); color: #fff; }
.ti-logo { width: 21px; height: 25px; }
.ti-text { font-weight: 700; font-size: 15.5px; margin-left: 1px; text-shadow: 1px 1px 1px #0f2f90; transform: scaleY(1.12); letter-spacing: -0.1px; }
.win-btns { margin-left: auto; display: flex; gap: 3px; }
.wb { width: 24px; height: 25px; border: 1px solid #dfe8fb; border-radius: 3px; background: linear-gradient(135deg, #5d8cf0, #2a5fdc 60%, #3b6fe5); display: flex; align-items: center; justify-content: center; position: relative; color: #fff; font-weight: 700; font-size: 18px; }
.wb-close { background: linear-gradient(135deg, #ef9a70, #d8481c 50%, #c9381a); }
.wb-min { width: 8px; height: 3px; background: #fff; margin-top: 12px; margin-right: 4px; }
.wb-rest { width: 8px; height: 8px; border: 1px solid #fff; border-top-width: 2px; box-shadow: -3px 3px 0 -1px #2a5fdc, -3px 3px 0 0 #fff; margin-left: 3px; margin-top: -2px; }

/* menu */
.menubar { height: 26px; flex: none; display: flex; align-items: center; padding: 0 3px 0 5px; border-bottom: 1px solid #d8d4bf; gap: 19.6px; }
.mn-logo { width: 14px; height: 22px; margin-right: 1px; }
.mi { font-size: 12.8px; transform: scaleY(1.12); }
.mdi-btns { margin-left: auto; display: flex; gap: 1px; height: 22px; }
.mb { width: 20px; background: #f4f2e8; display: flex; align-items: center; justify-content: center; }
.mb-min { width: 6px; height: 2px; background: #555; margin-top: 6px; }
.mb-rest { width: 8px; height: 9px; border: 1px solid #555; border-top-width: 2px; }

/* toolbars */
.toolbar { flex: none; display: flex; align-items: center; position: relative; border-top: 1px solid #fbfaf4; border-bottom: 1px solid #d8d4bf; }
.tb1 { height: 36px; padding-left: 10px; }
.tb2 { height: 45px; padding-left: 17px; }
.grip { position: absolute; left: 5px; top: 6px; bottom: 6px; width: 2px; background: repeating-linear-gradient(180deg, #9a9a8c 0 2px, transparent 2px 4px); }
.s31, .s30, .s16, .s32, .s21 { display: flex; align-items: center; justify-content: center; height: 30px; flex: none; }
.s31 { width: 31px; } .s30 { width: 30px; } .s16 { width: 16px; } .s32 { width: 32px; } .s21 { width: 21px; }
.sep { width: 1px; height: 28px; background: #d3cfba; flex: none; }
.mini { width: 0; height: 0; border-left: 3.5px solid transparent; border-right: 3.5px solid transparent; border-top: 4px solid #222; }
.mini-off { border-top-color: #b7b6aa; }
.lbl { font-size: 12.5px; transform: scaleY(1.12); white-space: nowrap; }
.combo { display: flex; align-items: stretch; height: 24px; background: #fff; border: 1.5px solid #a6bbd0; flex: none; font-size: 12.5px; }
.cb-val { flex: 1; padding-left: 3px; display: flex; align-items: center; white-space: nowrap; transform: scaleY(1.12); transform-origin: 0 50%; }
.dd { width: 19px; background: linear-gradient(180deg, #cfdcf8, #b3c8f4); display: flex; align-items: center; justify-content: center; }
.cb-zoom { width: 100px; }
.cb-page { width: 188px; }
.cb-units { width: 107px; }
.cb-nudge { width: 87px; height: 26px; }
.spin { width: 20px; background: linear-gradient(180deg, #cfdcf8, #b3c8f4); display: flex; flex-direction: column; align-items: center; justify-content: center; gap: 2px; }
.stackic { width: 19px; margin-left: 5px; display: flex; flex-direction: column; gap: 1px; align-items: center; }
.sic22 { width: 22px; margin-left: 0; gap: 0; }
.pair { border: 1.5px solid #a6bbd0; flex: none; display: flex; flex-direction: column; height: 38px; background: #a6bbd0; gap: 1px; }
.pair-size { width: 114px; }
.pair-dup { width: 113px; }
.pr { flex: 1; background: #fff; display: flex; align-items: center; padding-right: 1px; gap: 2px; }
.pv { flex: 1; padding-left: 2px; font-size: 12.5px; transform: scaleY(1.12); transform-origin: 0 50%; }
.mspin { width: 10px; align-self: stretch; background: #c5d4f6; display: flex; align-items: center; justify-content: center; }
.tbtn { width: 28px; height: 28px; border: 1.5px solid #4b7ea0; border-radius: 3px; background: #e3e1d4; display: flex; align-items: center; justify-content: center; flex: none; }

/* workspace */
.workspace { flex: 1; min-height: 0; display: flex; }

/* toolbox */
.toolbox { width: 36px; flex: none; display: flex; flex-direction: column; align-items: center; border-right: 1px solid #d3cfba; padding-top: 13px; position: relative; }
.grip-h { position: absolute; top: 5px; left: 7px; width: 21px; height: 2px; background: repeating-linear-gradient(90deg, #a9a89a 0 2px, transparent 2px 4px); }
.tool { height: 30.6px; width: 28px; display: flex; align-items: center; justify-content: center; position: relative; flex: none; }
.tool-on { border: 1.5px solid #4b7ea0; border-radius: 3px; background: #e3e1d4; height: 28px; margin: 1px 0 1.600px; }
.fly::after { content: ""; position: absolute; right: -1px; bottom: 4px; border-left: 5px solid transparent; border-bottom: 5px solid #111; }

/* rulers */
.doc { flex: none; width: 1294px; display: flex; flex-direction: column; }
.rtop { height: 25px; flex: none; display: flex; border-bottom: 1px solid #b9b6a4; }
.corner { width: 23px; flex: none; display: flex; align-items: center; justify-content: center; padding-top: 6px; }
.rtop-track { flex: 1; position: relative; display: flex; padding-left: 53.3px; background: repeating-linear-gradient(90deg, #555 0 1.5px, transparent 1.5px 18.34px) 16.6px 100% / 100% 3px no-repeat; background-position: 16.6px 21px; }
.rc { width: 91.7px; flex: none; position: relative; font-size: 12px; }
.rc::before { content: ""; position: absolute; left: 0; bottom: 0; width: 1px; height: 11px; background: #222; }
.rn, .rh, .rw { position: absolute; top: 1px; transform: scaleY(1.15); white-space: nowrap; }
.rn { left: -17px; }
.rh { left: -2px; letter-spacing: -0.6px; }
.rw { left: -4px; }
.runit { position: absolute; right: 8px; top: 2px; font-size: 12px; transform: scaleY(1.1); letter-spacing: -0.3px; }
.rcursor { position: absolute; left: 906px; top: 3px; bottom: 1px; width: 0; border-left: 1px dashed #333; }

.docbody { flex: 1; min-height: 0; display: flex; }
.rleft { width: 23px; flex: none; position: relative; padding-top: 11.5px; border-right: 1px solid #b9b6a4; background: repeating-linear-gradient(180deg, #555 0 1.5px, transparent 1.5px 18.34px) 19px 11.5px / 2px 100% no-repeat; }
.vc { height: 91.8px; position: relative; font-size: 12px; }
.vc::before { content: ""; position: absolute; right: 0; top: 0; width: 11px; height: 1px; background: #222; }
.vn, .vh, .vw { position: absolute; left: 4px; writing-mode: vertical-rl; transform: rotate(180deg); white-space: nowrap; line-height: 14px; }
.vh { bottom: 89.800px; letter-spacing: -0.6px; }
.vn { top: 8px; }
.vw { top: -4px; }
.vunit { position: absolute; left: 4px; bottom: 5px; writing-mode: vertical-rl; transform: rotate(180deg); font-size: 12px; line-height: 14px; background: #ece9d8; }
.vcursor { position: absolute; left: 2px; right: 0; top: 508px; border-top: 1px dashed #333; }

.docmain { flex: 1; min-width: 0; display: flex; flex-direction: column; }
.canvasrow { flex: 1; min-height: 0; display: flex; }
.canvas { flex: 1; background: #fff; position: relative; overflow: hidden; }
.pageedge { position: absolute; left: 1154px; top: 0; bottom: 0; width: 8px; background: #b3b3b3; }
.banner { position: absolute; left: 89px; top: 162px; width: 983px; height: 177px; background: #ffff00; display: flex; align-items: center; justify-content: center; padding: 11px 0 0 10px; }
.banner-text { font-family: "Liberation Serif", "Times New Roman", serif; font-weight: 700; font-size: 76px; color: #2f0f78; white-space: nowrap; line-height: 1; transform: scaleX(1.138); }

.vscroll { width: 22px; flex: none; background: linear-gradient(90deg, #f2f0e6, #fdfdfb 40%, #f6f4ec); border-right: 3px solid #d5d1bc; display: flex; flex-direction: column; align-items: center; padding: 1px 2px 1px 0; }
.sbtn { width: 17px; height: 19px; flex: none; background: linear-gradient(180deg, #d2dff9, #b5c9f4); border: 1px solid #e1e9fb; border-radius: 2px; display: flex; align-items: center; justify-content: center; }
.vthumb { width: 17px; height: 87px; margin: 217px 0 auto; background: linear-gradient(90deg, #c8d7f8, #b0c6f5); border: 1px solid #dbe4f8; border-bottom-color: #93a8d6; border-radius: 2px; display: flex; align-items: center; justify-content: center; flex: none; }
.thumbgrip { width: 8px; height: 9px; background: repeating-linear-gradient(180deg, #e3ebfb 0 1px, #a9bdeb 1px 3px); }

.pagebar { height: 22px; flex: none; display: flex; align-items: center; background: #efecdf; border-top: 1px solid #cfcbb6; padding-left: 0; }
.pg { width: 20px; display: flex; align-items: center; justify-content: center; flex: none; }
.pgnum { width: 82px; text-align: center; font-size: 14.5px; }
.pgtab { width: 80px; height: 21px; margin-left: 3px; background: #fff; clip-path: polygon(0 0, 88% 0, 100% 60%, 100% 100%, 0 100%); display: flex; align-items: center; padding-left: 15px; font-size: 14px; flex: none; }
.pggrip { width: 2px; height: 14px; margin-left: 345px; background: repeating-linear-gradient(180deg, #999 0 2px, transparent 2px 4px); flex: none; }
.hscroll { display: flex; align-items: center; margin-left: 5px; flex: none; width: 610px; }
.hbtn { width: 18px; height: 18px; background: linear-gradient(180deg, #d2dff9, #b5c9f4); border-radius: 2px; display: flex; align-items: center; justify-content: center; flex: none; }
.htrack { flex: 1; height: 18px; background: linear-gradient(180deg, #f4f2e9, #fdfdfb); padding-left: 225px; display: flex; }
.hthumb { width: 208px; height: 17px; background: linear-gradient(180deg, #c8d7f8, #b5caf5); border: 1px solid #dbe4f8; border-right-color: #9cb0dc; border-radius: 2px; display: flex; align-items: center; justify-content: center; }
.thumbgrip-h { width: 9px; height: 8px; background: repeating-linear-gradient(90deg, #e3ebfb 0 1px, #a9bdeb 1px 3px); }
.pgmag { margin-left: 2px; }

/* docker */
.docker { width: 245px; flex: none; display: flex; flex-direction: column; }
.dk-head { height: 24px; flex: none; background: #d7d3bf; display: flex; align-items: center; padding: 0 6px 0 8px; border-left: 1px solid #cac6b0; }
.dk-title { font-size: 12.8px; transform: scaleY(1.12); flex: 1; }
.dk-more { font-size: 20px; color: #555; line-height: 1; margin-top: -3px; margin-right: 14px; font-weight: 700; }
.dk-up { width: 0; height: 0; border-left: 5px solid transparent; border-right: 5px solid transparent; border-bottom: 6px solid #555; margin-right: 13px; }
.dk-body { flex: 1; min-height: 0; display: flex; }
.dk-panel { width: 218px; flex: none; padding: 10px 0 0 20px; display: flex; flex-direction: column; align-items: flex-start; border-left: 3px solid #d7d3bf; }
.dk-tabs { display: flex; gap: 4px; }
.dtb { width: 26px; height: 26px; border: 1.5px solid #4b7ea0; border-radius: 3px; background: #f4f3ea; display: flex; align-items: center; justify-content: center; }
.dtb-on { background: #e3e1d4; }
.rule { border: 0; height: 1px; background: #a5a291; width: 168px; margin: 0 0 0 -1px; flex: none; }
.rule-a { margin-top: 9px; }
.rule-b { margin-top: 14px; }
.fl { height: 18px; display: flex; align-items: center; margin-left: -2px; font-size: 12.5px; transform: scaleY(1.1); transform-origin: 0 50%; }
.fl-rot { margin-top: 11px; }
.fl-center { margin-top: 9px; }
.frow { display: flex; align-items: center; height: 26px; margin-left: -2px; flex: none; }
.fr-angle { margin-top: 14px; }
.fr-h { margin-top: 10px; }
.fr-v { margin-top: 6px; }
.fl-in { width: 38px; font-size: 12.5px; margin-top: -3px; }
.fl-dis { width: 26px; font-size: 12.5px; color: #b4b2a4; text-align: right; padding-right: 2px; }
.dis-in { height: 26px; border: 1.5px solid #a6bbd0; background: #ece9d8; display: flex; align-items: center; color: #b4b2a4; font-size: 13px; }
.di-angle { width: 87px; }
.di-c { width: 105px; }
.dv { flex: 1; padding: 0 4px; margin-top: -3px; }
.dspin { width: 21px; align-self: stretch; margin: 1px 2px 1px 0; background: #f2f0e6; display: flex; flex-direction: column; align-items: center; justify-content: center; opacity: .35; }
.dunit { color: #b4b2a4; font-size: 12.5px; margin-left: 2px; }
.dunit-in { margin-left: 6px; }
.relc { display: flex; align-items: center; gap: 3px; color: #b4b2a4; font-size: 12.5px; margin-top: 19px; height: 15px; margin-left: 1px; }
.cbx { width: 15px; height: 15px; background: #f9f8f2; border: 1px solid #dcd9c8; }
.anchors { margin-top: 13px; margin-left: 9px; display: flex; align-items: center; flex: none; }
.anchor-svg { width: 72px; height: 62px; }
.anc-lines { stroke: #d0cdbb; fill: none; }
.anc-box { fill: #fbfaf4; stroke: #d0cdbb; }
.anc-box circle { fill: none; }
.anchor-ic { width: 34px; height: 38px; margin-left: 36px; margin-top: -3px; }
.apply { width: 167px; border: 1px solid #d8d5c4; border-radius: 3px; background: #f3f1e7; color: #a8a698; display: flex; align-items: center; justify-content: center; font-size: 12.5px; flex: none; }
.ap-a { height: 24px; margin-top: 10px; }
.ap-b { height: 25px; margin-top: 5px; }

.dk-side { flex: 1; display: flex; flex-direction: column; padding-top: 5px; }
.vtab { display: flex; flex-direction: column; align-items: center; flex: none; }
.vtxt { writing-mode: vertical-rl; font-size: 12.5px; white-space: nowrap; }
.vtab-om { width: 23px; height: 123px; background: #c9d8f3; border-radius: 0 6px 0 0; gap: 1px; color: #444; padding-top: 1px; }
.vtab-om .vtxt { letter-spacing: .4px; font-size: 13px; }
.vtab-h { width: 23px; height: 63px; border-right: 1px solid #cfcbb6; border-bottom: 1px solid #cfcbb6; border-radius: 0 0 6px 0; padding-top: 2px; gap: 4px; color: #555; }
.vtab-t { width: 27px; height: 147px; background: #f4f2e6; border-radius: 0 6px 6px 0; gap: 6px; padding-top: 2px; position: relative; }
.vtab-t .vtxt { font-size: 13px; }
.vclose { width: 19px; height: 17px; background: #fbfaf3; display: flex; align-items: center; justify-content: center; margin-top: 4px; }
.vrest { flex: 1; border-left: 1px solid #c9c5b0; border-top: 1px solid #c9c5b0; border-radius: 5px 0 0 0; width: 27px; }

/* palette */
.palette { width: 25px; flex: none; display: flex; flex-direction: column; align-items: flex-start; border-left: 1px solid #cfcbb6; padding-left: 2px; position: relative; }
.grip-p { width: 10px; height: 2px; margin: 5px 0 0 5px; background: repeating-linear-gradient(90deg, #a9a89a 0 2px, transparent 2px 4px); flex: none; }
.pl-play { width: 16px; height: 16px; border-radius: 50%; margin: 7px 0 0 3px; background: #fff; border: 1px solid #b6b4a4; display: flex; align-items: center; justify-content: center; flex: none; }
.pl-play::after { content: ""; border-left: 6px solid #222; border-top: 4px solid transparent; border-bottom: 4px solid transparent; margin-left: 2px; }
.pl-up { width: 18px; height: 17px; margin: 3px 0 0 1px; background: #f5f3ea; display: flex; align-items: center; justify-content: center; flex: none; opacity: .8; }
.pl-none { width: 18px; height: 17px; margin: 4px 0 0 1px; }
.swatches { display: flex; flex-direction: column; margin-top: 1px; width: 20px; flex: none; }
.sw { height: 20px; border-bottom: 1px solid #6f6f6a; }
.c1 { background: #23211d; } .c2 { background: #3a3835; } .c3 { background: #4a4846; } .c4 { background: #5a5a58; } .c5 { background: #6b6b6b; } .c6 { background: #7d7d7d; } .c7 { background: #8e8e8e; } .c8 { background: #a0a0a0; } .c9 { background: #b8b8b8; } .c10 { background: #d8d8d8; } .c11 { background: #ffffff; } .c12 { background: #2f0f78; } .c13 { background: #0a8de0; } .c14 { background: #0a9150; } .c15 { background: #ffff00; } .c16 { background: #ee3b00; } .c17 { background: #f02c7a; } .c18 { background: #a24574; } .c19 { background: #f58000; } .c20 { background: #ff9c9c; } .c21 { background: #776557; } .c22 { background: #b9b0d7; } .c23 { background: #9184b6; } .c24 { background: #6978b4; } .c25 { background: #75609e; } .c26 { background: #7a7090; } .c27 { background: #4c5878; } .c28 { background: #4c4a5a; }
.pl-down { width: 18px; height: 18px; margin: 1px 0 0 1px; background: linear-gradient(180deg, #d2dff9, #b5c9f4); border-radius: 2px; display: flex; align-items: center; justify-content: center; flex: none; }
.pl-end { width: 12px; height: 12px; margin: 5px 0 0 5px; border-left: 2px solid #222; position: relative; flex: none; }
.pl-end::after { content: ""; position: absolute; left: 1px; top: 0; border-right: 7px solid #222; border-top: 6px solid transparent; border-bottom: 6px solid transparent; }

/* status */
.status { height: 53px; flex: none; display: flex; align-items: flex-end; border-top: 1px solid #fbfaf4; padding: 0 2px 2px 5px; }
.st-coord { width: 135px; font-size: 13px; padding-bottom: 4px; flex: none; transform: scaleY(1.1); letter-spacing: .4px; white-space: nowrap; }
.st-hint { flex: 1; font-size: 12.65px; padding-bottom: 4px; white-space: nowrap; transform: scaleY(1.12); transform-origin: 0 50%; }
.st-swatches { display: flex; flex-direction: column; gap: 3px; margin-right: 34px; margin-bottom: 2px; flex: none; }
.st-row { display: flex; align-items: center; gap: 7px; }
.st-sw { width: 20px; height: 20px; }
.st-black { width: 20px; height: 21px; background: #000; }
.shadow { width: 160px; height: 29px; background: #e6f0ee; border: 1px solid #9fc4c4; border-radius: 4px; display: flex; align-items: center; justify-content: center; font-size: 20px; color: #2a2aa0; text-shadow: 1px 2px 2px #777; margin-bottom: 0; flex: none; }

/* taskbar */
.taskbar { height: 35px; flex: none; display: flex; align-items: stretch; background: linear-gradient(180deg, #3d95ff 0, #245edb 10%, #2663e0 60%, #1c4fc4 100%); color: #fff; }
.start { width: 113px; flex: none; background: linear-gradient(180deg, #4fa84f 0, #3c9a3c 15%, #358d35 70%, #2a7a2a 100%); border-radius: 0 14px 14px 0; display: flex; align-items: center; padding-left: 10px; gap: 5px; box-shadow: inset -3px 0 4px #1f5f1f; }
.start-t { font-weight: 700; font-style: italic; font-size: 21px; text-shadow: 1px 1px 2px #1c4a1c; }
.tasks { display: flex; gap: 2px; margin-left: 12px; align-items: center; flex: none; }
.task { width: 186px; height: 27px; background: linear-gradient(180deg, #4a8df5, #3c81f3 50%, #3a7bec); border-radius: 2px; display: flex; align-items: center; gap: 4px; padding-left: 10px; font-size: 12.6px; white-space: nowrap; }
.task-on { background: linear-gradient(180deg, #1a4aa8, #1e52b7); }
.tk-help { width: 22px; height: 22px; margin-left: 48px; align-self: center; flex: none; }
.tray { margin-left: auto; width: 257px; flex: none; display: flex; align-items: center; padding-left: 12px; gap: 1.6px; background: linear-gradient(180deg, #16a9ee 0, #0e8fe0 40%, #0d8adf 80%, #0c74c9 100%); border-left: 1px solid #0c3f9a; }
.clock { margin-left: 6px; font-size: 12.5px; white-space: nowrap; }
```
